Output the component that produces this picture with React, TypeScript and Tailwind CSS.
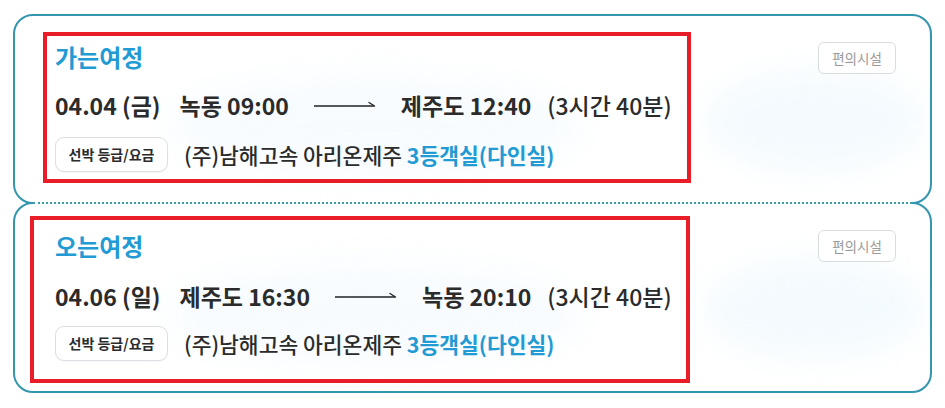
import React from "react";

function Arrow({ className = "" }: { className?: string }) {
  return (
    <svg width="62" height="10" viewBox="0 0 62 10" className={className} fill="none">
      <path d="M0 6 H60" stroke="#222" strokeWidth="1.6" />
      <path d="M55 2.5 L60.5 6" stroke="#222" strokeWidth="1.4" strokeLinecap="round" />
    </svg>
  );
}

type Trip = {
  title: string;
  date: string;
  from: string;
  to: string;
  duration: string;
};

function Content({ t, pt, gap }: { t: Trip; pt: string; gap: string }) {
  return (
    <div className={pt}>
      <div className="text-[24px] leading-[30px] font-bold text-[#229ad3]">{t.title}</div>
      <div className={`${gap} flex items-center text-[23px] leading-[30px] text-[#2b2b2b]`}>
        <span className="font-bold">{t.date}</span>
        <span className="font-bold ml-[19px]">{t.from}</span>
        <Arrow className="mx-[25px]" />
        <span className="font-bold">{t.to}</span>
        <span className="ml-[16px] font-medium">{t.duration}</span>
      </div>
    </div>
  );
}

function Ship() {
  return (
    <div className="flex items-center">
      <button className="h-[35px] w-[113px] rounded-[9px] border border-[#dcdfe3] bg-white text-[14px] font-bold text-[#2b2b2b] shadow-[0_1px_2px_rgba(0,0,0,0.04)]">
        선박 등급/요금
      </button>
      <span className="ml-[16px] text-[21.5px] leading-[30px] font-medium text-[#2b2b2b]">
        (주)남해고속 아리온제주 <span className="font-bold text-[#229ad3]">3등객실(다인실)</span>
      </span>
    </div>
  );
}

function Amenity({ mt }: { mt: string }) {
  return (
    <button
      className={`${mt} relative h-[32px] w-[78px] shrink-0 rounded-[6px] border border-[#d9dcdf] bg-white text-[13.5px] text-[#9a9a9a]`}
    >
      편의시설
    </button>
  );
}

function Blobs() {
  return (
    <>
      <div className="pointer-events-none absolute left-[690px] top-[55px] h-[100px] w-[220px] rounded-[50%] bg-[#e9f6fc] opacity-50 blur-[16px]" />
      <div className="pointer-events-none absolute left-[150px] top-[60px] h-[100px] w-[420px] rounded-[50%] bg-[#f0f8fd] opacity-50 blur-[18px]" />
    </>
  );
}

export default function App() {
  const go: Trip = {
    title: "가는여정",
    date: "04.04 (금)",
    from: "녹동 09:00",
    to: "제주도 12:40",
    duration: "(3시간 40분)",
  };
  const back: Trip = {
    title: "오는여정",
    date: "04.06 (일)",
    from: "제주도 16:30",
    to: "녹동 20:10",
    duration: "(3시간 40분)",
  };
  return (
    <div className="min-h-[408px] w-[945px] bg-white pl-[13px] pt-[14px] font-['Noto_Sans_CJK_KR','Noto_Sans',sans-serif]">
      <div className="relative w-[919px]">
        {/* top card */}
        <div className="relative flex h-[190px] justify-between overflow-hidden rounded-[20px] border-2 border-[#3396ae] bg-white pl-[28px] pr-[34px] pt-[16px]">
          <Blobs />
          <div className="relative flex h-[151px] w-[648px] flex-col border-4 border-[#e81d27] pl-[8px]">
            <Content t={go} pt="pt-[6px]" gap="mt-[18px]" />
            <div className="mt-[17px]">
              <Ship />
            </div>
          </div>
          <Amenity mt="mt-[10px]" />
        </div>
        {/* bottom card */}
        <div className="relative -mt-[2px] flex h-[191px] justify-between overflow-hidden rounded-[20px] border-2 border-[#3396ae] bg-white pl-[15px] pr-[34px] pt-[12px]">
          <Blobs />
          <div className="relative flex h-[167px] w-[660px] flex-col border-4 border-[#e81d27] pl-[21px]">
            <Content t={back} pt="pt-[11px]" gap="mt-[20px]" />
            <div className="mt-[15px]">
              <Ship />
            </div>
          </div>
          <Amenity mt="mt-[14px]" />
        </div>
        {/* perforation */}
        <div className="absolute left-[20px] right-[20px] top-[188px] h-[2px] border-t-2 border-dotted border-[#3a9fa6] bg-white" />
      </div>
    </div>
  );
}
